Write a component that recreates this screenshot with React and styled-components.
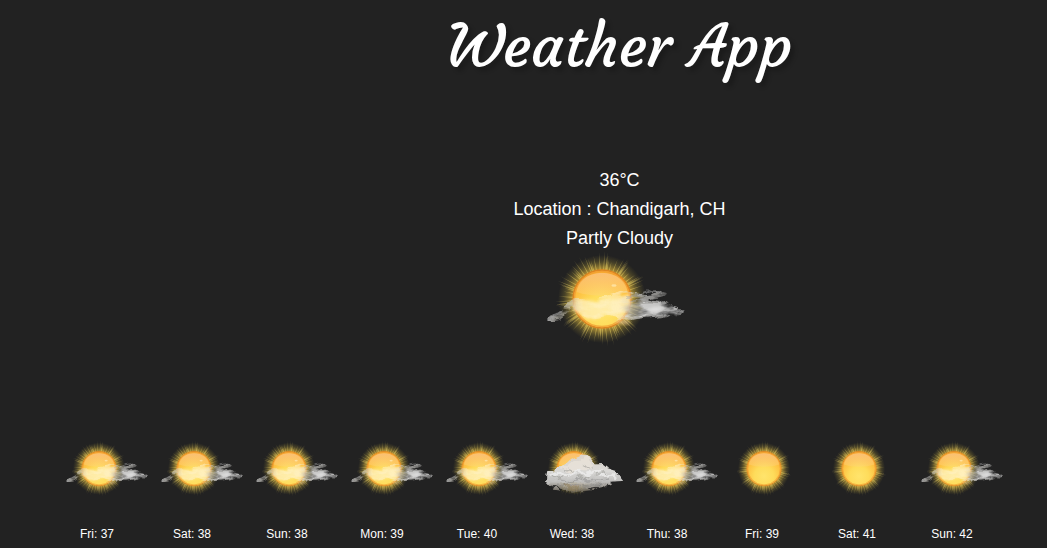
import React from "react";
import styled, { createGlobalStyle } from "styled-components";

const GlobalStyle = createGlobalStyle`
  * { box-sizing: border-box; }
  body { margin: 0; background: #222222; color: #fff; font-family: "Liberation Sans", Arial, sans-serif; overflow: hidden; }
`;

const Page = styled.main`
  height: 548px;
  display: flex;
  flex-direction: column;
  overflow: hidden;
`;

const Title = styled.h1`
  margin: 0 0 0 192px;
  padding-top: 10px;
  height: 166px;
  text-align: center;
  font: normal 400 60px/72px Courgette, Lato, cursive;
  text-shadow: 4px 4px 4px rgba(0, 0, 0, 0.22);
`;

const Current = styled.section`
  height: 273px;
  margin-left: 192px;
  display: flex;
  flex-direction: column;
  align-items: center;
  font-size: 18px;
  line-height: 29px;
`;

const Line = styled.div`
  white-space: nowrap;
`;

const Icon = styled.svg`
  display: block;
  flex: none;
  overflow: visible;
  width: ${(p) => (p.$large ? 150 : 89)}px;
  height: ${(p) => (p.$large ? 100 : 59.3)}px;
  margin-left: ${(p) => (p.$large ? -4 : 14.5)}px;
  margin-top: ${(p) => (p.$large ? -4.5 : 0)}px;
`;

const Forecast = styled.section`
  display: flex;
  padding-left: 49.5px;
`;

const Day = styled.div`
  width: 95px;
  flex: none;
`;

const DayLabel = styled.div`
  margin-top: 29px;
  text-align: center;
  font-size: 12px;
  line-height: 15px;
`;

const Shared = styled.svg`
  position: absolute;
  width: 0;
  height: 0;
`;

const rays = Array.from({ length: 84 }, (_, i) => {
  const angle = (i / 84) * Math.PI * 2 + Math.sin(i * 7.3) * 0.06;
  const length = 37 + Math.abs(Math.sin(i * 12.99)) * 11;
  const spread = 0.02;
  const at = (r, a) => `${(59 + Math.cos(a) * r).toFixed(2)} ${(50 + Math.sin(a) * r).toFixed(2)}`;
  return `M${at(28, angle - spread)}L${at(length, angle)}L${at(28, angle + spread)}Z`;
}).join("");

function Definitions() {
  return (
    <Shared aria-hidden="true">
      <defs>
        <radialGradient id="glow">
          <stop offset=".64" stopColor="#c79d36" stopOpacity=".95" />
          <stop offset=".74" stopColor="#a18834" stopOpacity=".75" />
          <stop offset=".86" stopColor="#887831" stopOpacity=".35" />
          <stop offset="1" stopColor="#7a6c2c" stopOpacity="0" />
        </radialGradient>
        <radialGradient id="ray" gradientUnits="userSpaceOnUse" cx="59" cy="50" r="48">
          <stop offset=".6" stopColor="#e0c658" stopOpacity=".7" />
          <stop offset=".8" stopColor="#c2ad58" stopOpacity=".65" />
          <stop offset="1" stopColor="#a39350" stopOpacity=".45" />
        </radialGradient>
        <radialGradient id="disc" cy=".72" r=".8">
          <stop stopColor="#ffe46c" />
          <stop offset=".35" stopColor="#fedc5b" />
          <stop offset=".65" stopColor="#fdc040" />
          <stop offset="1" stopColor="#f8a62c" />
        </radialGradient>
        <linearGradient id="gloss" x2="0" y2="1">
          <stop stopColor="#fbc58e" stopOpacity=".7" />
          <stop offset="1" stopColor="#ffd480" stopOpacity=".35" />
        </linearGradient>
        <linearGradient id="wisp" gradientUnits="userSpaceOnUse" x1="5" x2="144" y1="0" y2="0">
          <stop stopColor="#aaa" stopOpacity=".8" />
          <stop offset=".17" stopColor="#c9c3ad" stopOpacity=".7" />
          <stop offset=".25" stopColor="#fff1c0" stopOpacity=".5" />
          <stop offset=".52" stopColor="#fff3d0" stopOpacity=".55" />
          <stop offset=".63" stopColor="#c5c3be" stopOpacity=".75" />
          <stop offset="1" stopColor="#a5a5a5" stopOpacity=".65" />
        </linearGradient>
        <linearGradient id="cloud" x2="0" y2="1">
          <stop stopColor="#ddd5cb" />
          <stop offset=".45" stopColor="#d9d8d6" />
          <stop offset=".72" stopColor="#bebdbb" />
          <stop offset=".88" stopColor="#999389" stopOpacity=".8" />
          <stop offset="1" stopColor="#807868" stopOpacity=".45" />
        </linearGradient>
        <filter id="wispy" x="-10%" y="-30%" width="120%" height="160%" colorInterpolationFilters="sRGB">
          <feTurbulence type="fractalNoise" baseFrequency=".05 .12" numOctaves="4" seed="8" result="noise" />
          <feColorMatrix in="noise" values="0 0 0 0 1  0 0 0 0 1  0 0 0 0 1  3.5 0 0 0 -.95" result="mask" />
          <feDisplacementMap in="SourceGraphic" in2="noise" scale="9" xChannelSelector="R" yChannelSelector="G" result="shape" />
          <feComposite in="shape" in2="mask" operator="in" />
          <feGaussianBlur stdDeviation=".7" />
        </filter>
        <filter id="soft" x="-20%" y="-30%" width="140%" height="160%" colorInterpolationFilters="sRGB">
          <feTurbulence type="fractalNoise" baseFrequency=".07 .13" numOctaves="3" seed="3" result="noise" />
          <feDisplacementMap in="SourceGraphic" in2="noise" scale="6" xChannelSelector="R" yChannelSelector="G" />
          <feGaussianBlur stdDeviation="1.4" />
        </filter>
        <filter id="billow" x="-10%" y="-10%" width="120%" height="120%" colorInterpolationFilters="sRGB">
          <feTurbulence type="fractalNoise" baseFrequency=".09 .13" numOctaves="4" seed="4" result="noise" />
          <feDisplacementMap in="SourceGraphic" in2="noise" scale="8" xChannelSelector="R" yChannelSelector="G" />
          <feGaussianBlur stdDeviation=".7" />
        </filter>
        <filter id="shade" x="-10%" y="-20%" width="120%" height="140%" colorInterpolationFilters="sRGB">
          <feTurbulence type="fractalNoise" baseFrequency=".08 .12" numOctaves="3" seed="11" result="noise" />
          <feDisplacementMap in="SourceGraphic" in2="noise" scale="12" xChannelSelector="R" yChannelSelector="G" />
          <feGaussianBlur stdDeviation="1.1" />
        </filter>
        <filter id="rayBlur" x="-5%" y="-5%" width="110%" height="110%">
          <feGaussianBlur stdDeviation=".45" />
        </filter>
      </defs>
    </Shared>
  );
}

function Sun() {
  return (
    <g>
      <circle cx="59" cy="50" r="44" fill="url(#glow)" />
      <path d={rays} fill="url(#ray)" filter="url(#rayBlur)" />
      <circle cx="59" cy="50" r="28.9" fill="url(#disc)" stroke="#dc8522" strokeWidth="1.5" />
      <circle cx="59" cy="50" r="27.5" fill="none" stroke="#f09b30" strokeWidth="1.5" opacity=".75" />
      <path d="M33.5 43C35 31 46 24 59 24S83 31 84.5 43C70 48 48 48 33.5 43Z" fill="url(#gloss)" />
    </g>
  );
}

function ThinCloud() {
  return (
    <g>
      <path d="M29 59C34 47 43 53 59 52C70 48 77 52 87 44L88 62C77 70 70 64 57 68C46 72 35 68 29 59Z" fill="#fff3cb" opacity=".65" filter="url(#soft)" />
      <path d="M82 58C94 50 105 53 117 55C123 58 129 60 132 62C120 66 100 69 84 67Z" fill="#b0b0b0" opacity=".6" filter="url(#soft)" />
      <g filter="url(#wispy)">
        <path d="M5 71C11 63 17 65 22 58C28 50 31 51 40 51C48 54 54 48 63 47C72 46 76 42 83 42C93 46 104 48 112 44C118 42 125 43 122 46C118 49 108 49 106 51C116 51 121 51 126 54C120 56 125 57 130 58C136 59 139 59 144 62C138 66 134 65 128 66C114 70 104 69 95 71C86 73 79 71 72 69C60 64 55 71 47 70C40 69 35 63 31 59C24 61 21 70 12 71Z" fill="url(#wisp)" />
        <path d="M82 62C94 53 104 53 119 54C130 58 135 59 138 61C123 67 101 69 82 68Z" fill="#dedede" opacity=".6" />
      </g>
      <path d="M103 61Q110 55 119 58Q122 61 117 63Q109 64 103 61Z" fill="#e4e4e4" opacity=".8" filter="url(#soft)" />
      <path d="M84 47Q96 47 102 44T118 43M86 52Q98 49 107 51T123 53M5 70Q12 68 19 63M104 67Q118 64 126 66M124 60L140 61" fill="none" stroke="#aaa" strokeWidth="1.7" opacity=".5" filter="url(#billow)" />
      <path d="M72 73Q79 68 87 74Q80 77 72 73Z" fill="#edca96" opacity=".6" filter="url(#soft)" />
      <ellipse cx="71" cy="36.5" rx="2.6" ry="1.3" fill="#ffedbb" opacity=".65" />
    </g>
  );
}

function ThickCloud() {
  return (
    <g>
      <path d="M12 62L14 54L25 54L33 46L42 44L53 35L64 31L75 26L84 27L90 35L94 43L106 42L115 49L131 54L135 62L142 71L120 72L123 77L100 82L93 86L72 88L56 91L39 86L24 84L17 77L12 71Z" fill="url(#cloud)" filter="url(#billow)" />
      <g filter="url(#shade)">
        <path d="M34 50C43 44 49 46 58 37C67 32 75 34 81 31C89 36 88 46 92 49C80 57 71 48 62 55C49 62 43 48 34 50Z" fill="#ebe4da" opacity=".7" />
        <path d="M18 62L34 58L48 62L65 54L79 60L96 54L111 63L126 60L132 67" fill="none" stroke="#f5f5f5" strokeWidth="5" opacity=".6" />
        <path d="M34 70L49 72L66 66L82 71L98 69L116 68M29 76L39 80L55 76L71 82L87 78L105 77" fill="none" stroke="#828282" strokeWidth="2.6" opacity=".45" />
        <path d="M42 54L53 50L61 55M73 44L83 49L92 47M94 59L106 57L115 62M24 62L32 66L43 64M63 60L74 65L85 63" fill="none" stroke="#969590" strokeWidth="2.2" opacity=".55" />
        <path d="M43 78C50 74 57 79 68 84C61 87 50 87 43 78Z" fill="#8e7b58" opacity=".55" />
        <path d="M14 79L34 83M85 84L120 77" stroke="#222222" strokeWidth="3.5" opacity=".8" />
      </g>
    </g>
  );
}

function WeatherIcon({ kind, large }) {
  return (
    <Icon viewBox="0 0 150 100" $large={large} aria-hidden="true">
      <Sun />
      {kind === "partly" && <ThinCloud />}
      {kind === "mostly" && <ThickCloud />}
    </Icon>
  );
}

const days = [
  ["Fri", 37, "partly"],
  ["Sat", 38, "partly"],
  ["Sun", 38, "partly"],
  ["Mon", 39, "partly"],
  ["Tue", 40, "partly"],
  ["Wed", 38, "mostly"],
  ["Thu", 38, "partly"],
  ["Fri", 39, "clear"],
  ["Sat", 41, "clear"],
  ["Sun", 42, "partly"],
];

export default function App() {
  return (
    <>
      <GlobalStyle />
      <Definitions />
      <Page>
        <Title>Weather App</Title>
        <Current>
          <Line>36°C</Line>
          <Line>Location : Chandigarh, CH</Line>
          <Line>Partly Cloudy</Line>
          <WeatherIcon kind="partly" large />
        </Current>
        <Forecast>
          {days.map(([name, high, kind], index) => (
            <Day key={index}>
              <WeatherIcon kind={kind} />
              <DayLabel>{name}: {high}</DayLabel>
            </Day>
          ))}
        </Forecast>
      </Page>
    </>
  );
}
